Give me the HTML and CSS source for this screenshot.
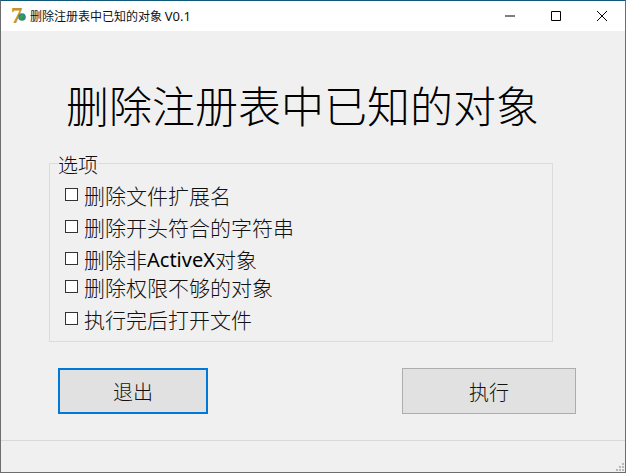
FILE: index.html
```html
<!DOCTYPE html>
<html lang="zh-CN">
<head>
  <meta charset="UTF-8">
  <title>删除注册表中已知的对象 V0.1</title>
  <link rel="stylesheet" href="styles.css">
</head>
<body>

  <div class="window">
    <div class="titlebar">
      <span class="app-icon">7<svg class="app-globe" width="8" height="8" viewBox="0 0 8 8">
        <circle cx="4" cy="4" r="3.800" fill="#2f8a7c"/>
        <path d="M2 3l2-1.500 2 1.500-1.500 1.500-1 2.500-1.500-2z" fill="#3f9f4a"/>
      </svg></span>
      <span class="title-text">删除注册表中已知的对象 <span class="version">V0.1</span></span>
      <div class="controls">
        <svg class="control" width="46" height="30" viewBox="0 0 46 30"><path d="M18 15h10" stroke="#000" fill="none"/></svg>
        <svg class="control" width="46" height="30" viewBox="0 0 46 30"><path d="M18.500 10.500h9v9h-9z" stroke="#000" fill="none"/></svg>
        <svg class="control" width="46" height="30" viewBox="0 0 46 30"><path d="M18 10l10 10M28 10l-10 10" stroke="#000" fill="none"/></svg>
      </div>
    </div>

    <div class="content">
      <h1>删除注册表中已知的对象</h1>

      <fieldset class="options">
        <legend>选项</legend>
        <label class="option"><span class="box"></span>删除文件扩展名</label>
        <label class="option"><span class="box"></span>删除开头符合的字符串</label>
        <label class="option"><span class="box"></span>删除非<span class="latin">ActiveX</span>对象</label>
        <label class="option tight"><span class="box"></span>删除权限不够的对象</label>
        <label class="option"><span class="box"></span>执行完后打开文件</label>
      </fieldset>

      <div class="actions">
        <button type="button" class="btn btn-exit">退出</button>
        <button type="button" class="btn btn-run">执行</button>
      </div>
    </div>

    <div class="statusbar">
      <svg class="grip" width="10" height="10" viewBox="0 0 10 10" fill="#b8b8b8">
        <rect x="7" y="1" width="2" height="2"/>
        <rect x="4" y="4" width="2" height="2"/>
        <rect x="7" y="4" width="2" height="2"/>
        <rect x="1" y="7" width="2" height="2"/>
        <rect x="4" y="7" width="2" height="2"/>
        <rect x="7" y="7" width="2" height="2"/>
      </svg>
    </div>
  </div>

</body>
</html>
```

FILE: styles.css
```css
* {
  box-sizing: border-box;
}
html, body {
  margin: 0;
  padding: 0;
}
body {
  width: 626px;
  height: 473px;
  overflow: hidden;
  font-family: "Noto Sans CJK SC", "Noto Sans", sans-serif;
  font-weight: 300;
  color: #111;
  background-color: #f0f0f0;
}
.window {
  width: 626px;
  height: 473px;
  display: flex;
  flex-direction: column;
  border-top: 1px solid #10597a;
  border-left: 1px solid #6d6d6d;
  border-right: 1px solid #6d6d6d;
  border-bottom: 1px solid #6d6d6d;
}
.titlebar {
  height: 30px;
  flex: none;
  display: flex;
  align-items: center;
  padding-left: 10px;
  background-color: #fff;
}
.app-icon {
  position: relative;
  width: 16px;
  height: 22px;
  flex: none;
  margin-right: 3px;
  font-family: "Liberation Serif", serif;
  font-size: 23px;
  line-height: 22px;
  font-weight: bold;
  color: #c8912a;
}
.app-globe {
  position: absolute;
  left: 7px;
  top: 8px;
  display: block;
}
.title-text {
  font-size: 12px;
  font-weight: 400;
  white-space: nowrap;
}
.version {
  font-family: "Noto Sans", sans-serif;
  font-size: 13px;
}
.controls {
  margin-left: auto;
  display: flex;
}
.control {
  display: block;
}
.content {
  flex: 1;
  padding-left: 48px;
}
h1 {
  margin: 41px 0 0 17px;
  font-size: 43px;
  line-height: 64px;
  font-weight: 300;
  color: #000;
  white-space: nowrap;
}
.options {
  width: 504px;
  height: 191px;
  margin: 15px 0 0 0;
  padding: 1px 0 0 15px;
  border: 1px solid #dcdcdc;
  min-inline-size: 0;
}
.options legend {
  padding: 4px 0 0 0;
  margin-left: -7px;
  font-size: 20px;
  line-height: 20px;
}
.option {
  display: flex;
  align-items: center;
  height: 28px;
  margin-top: 4px;
  padding-top: 2px;
  font-size: 21px;
  white-space: nowrap;
}
.option.tight {
  margin-top: 0;
}
.box {
  width: 13px;
  height: 13px;
  flex: none;
  margin-top: -2px;
  margin-right: 6px;
  border: 1px solid #333;
  background-color: #fff;
}
.latin {
  font-family: "Noto Sans", sans-serif;
  font-size: 20px;
  font-weight: 400;
  color: #000;
}
.actions {
  display: flex;
  justify-content: space-between;
  width: 518px;
  margin: 26px 0 0 9px;
}
.btn {
  height: 46px;
  padding: 0;
  font-family: inherit;
  font-size: 20px;
  font-weight: 300;
  color: #111;
  background-color: #e1e1e1;
  border: 1px solid #adadad;
}
.btn-exit {
  width: 150px;
  border: 2px solid #0078d7;
}
.btn-run {
  width: 174px;
}
.statusbar {
  height: 32px;
  flex: none;
  display: flex;
  justify-content: flex-end;
  align-items: flex-end;
  border-top: 1px solid #d9d9d9;
}
.grip {
  display: block;
}
```
